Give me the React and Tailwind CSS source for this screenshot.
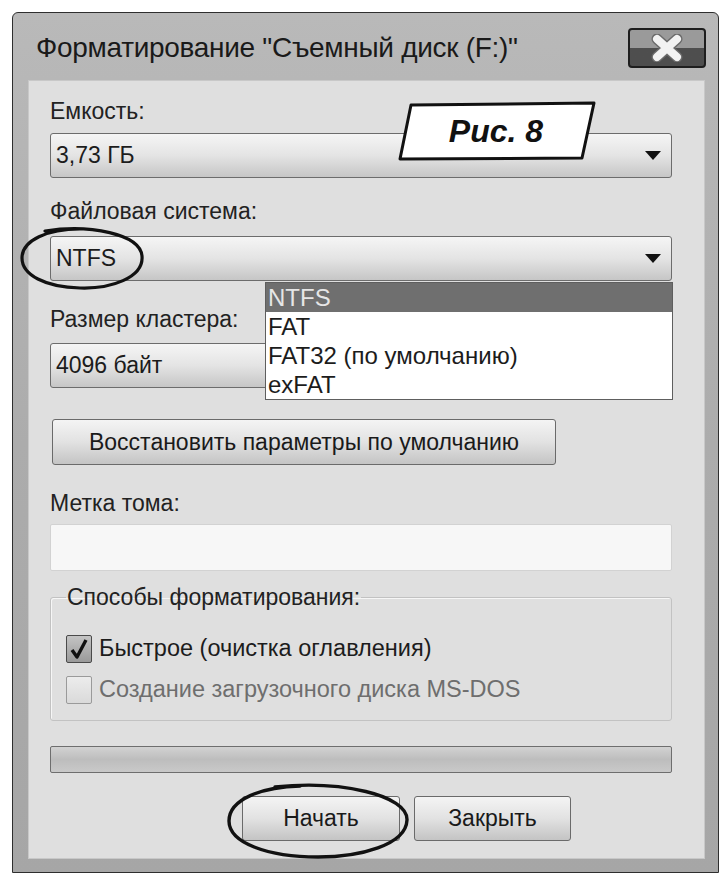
import React from "react";

const ui = { fontFamily: '"Liberation Sans", Arial, sans-serif' };

const Arrow = () => (
  <svg width="16" height="9" viewBox="0 0 16 9" className="shrink-0">
    <path d="M0 0 H16 L8 9 Z" fill="#111" />
  </svg>
);

const Combo = ({ value, className = "" }) => (
  <div
    className={`h-[45px] flex items-center justify-between pl-[5px] pr-[10px] border border-[#6c6c6c] rounded-[3px] bg-gradient-to-b from-[#f5f5f5] via-[#e4e4e4] to-[#c6c6c6] text-[23px] text-[#1c1c1c] ${className}`}
  >
    <span>{value}</span>
    <Arrow />
  </div>
);

const Label = ({ children, className = "" }) => (
  <div className={`h-[28px] leading-[28px] text-[23px] text-[#222] ${className}`}>{children}</div>
);

const Btn = ({ children, className = "" }) => (
  <div
    className={`flex items-center justify-center border border-[#6a6a6a] rounded-[3px] bg-gradient-to-b from-[#f4f4f4] via-[#e2e2e2] to-[#c4c4c4] text-[23px] text-[#1a1a1a] ${className}`}
  >
    {children}
  </div>
);

const CheckBox = ({ checked }) => (
  <div
    className={`w-[26px] h-[28px] shrink-0 flex items-center justify-center rounded-[2px] border ${
      checked
        ? "border-[#4a4a4a] bg-gradient-to-b from-[#c4c4c4] to-[#9a9a9a]"
        : "border-[#9a9a9a] bg-gradient-to-b from-[#ececec] to-[#dadada]"
    }`}
  >
    {checked && (
      <svg width="20" height="22" viewBox="0 0 20 22">
        <path d="M3 12 L8 19 L17 2" fill="none" stroke="#111" strokeWidth="3.4" strokeLinejoin="round" />
      </svg>
    )}
  </div>
);

export default function App() {
  return (
    <div className="relative w-[726px] h-[886px] bg-white pt-[12px] pl-[12px]" style={ui}>
      {/* window frame */}
      <div className="w-[707px] h-[861px] flex flex-col border border-[#2e2e2e] rounded-t-[6px] bg-gradient-to-b from-[#b9b9b9] via-[#acacac] to-[#a6a6a6]">
        {/* title bar */}
        <div className="h-[67px] flex items-center justify-between pl-[23px] pr-[12px] pt-[3px]">
          <span className="text-[28px] text-[#1a1a1a] tracking-[-0.3px]">
            Форматирование "Съемный диск (F:)"
          </span>
          <div className="w-[78px] h-[40px] flex items-center justify-center rounded-[4px] border-2 border-[#1e1e1e] bg-gradient-to-b from-[#9a9a9a] from-50% to-[#4e4e4e] to-50%">
            <svg width="34" height="28" viewBox="0 0 34 28">
              <path d="M7 5 L27 23 M27 5 L7 23" stroke="#6a6a6a" strokeWidth="11" strokeLinecap="round" />
              <path d="M7 5 L27 23 M27 5 L7 23" stroke="#f2f2f2" strokeWidth="8" strokeLinecap="round" />
            </svg>
          </div>
        </div>

        {/* client area */}
        <div className="flex-1 ml-[15px] mr-[13px] mb-[13px] bg-[#dfdfdf] border border-[#c8c8c8] pl-[21px] pr-[32px] pt-[16px] flex flex-col">
          <Label>Емкость:</Label>
          <Combo value="3,73 ГБ" className="mt-[8px]" />

          <Label className="mt-[19px]">Файловая система:</Label>
          <Combo value="NTFS" className="mt-[11px] h-[44px]" />

          <Label className="mt-[24px]">Размер кластера:</Label>
          <Combo value="4096 байт" className="mt-[10px] h-[43px]" />

          <Btn className="mt-[31px] w-[504px] h-[46px] ml-[2px]">Восстановить параметры по умолчанию</Btn>

          <Label className="mt-[24px]">Метка тома:</Label>
          <div className="mt-[7px] h-[47px] bg-[#f7f7f7] border border-[#d2d2d2] rounded-[2px]" />

          <fieldset className="mt-[12px] h-[138px] border border-[#c2c2c2] rounded-[3px] px-[15px] shadow-[inset_1px_1px_0_#f6f6f6]">
            <legend className="px-[1px] text-[23px] leading-[28px] text-[#222]">Способы форматирования:</legend>
            <div className="mt-[20px] flex items-center gap-[7px]">
              <CheckBox checked />
              <span className="text-[23.5px] text-[#1c1c1c]">Быстрое (очистка оглавления)</span>
            </div>
            <div className="mt-[6px] flex items-center gap-[7px]">
              <CheckBox />
              <span className="text-[23.5px] text-[#6e6e6e]">Создание загрузочного диска MS-DOS</span>
            </div>
          </fieldset>

          <div className="mt-[25px] h-[27px] border border-[#6e6e6e] rounded-[2px] bg-gradient-to-b from-[#d2d2d2] via-[#bdbdbd] to-[#c9c9c9]" />

          <div className="mt-[23px] flex gap-[14px] pl-[192px]">
            <Btn className="w-[158px] h-[45px]">Начать</Btn>
            <Btn className="w-[157px] h-[45px]">Закрыть</Btn>
          </div>
        </div>
      </div>

      {/* open drop-down list */}
      <div className="absolute left-[265px] top-[282px] w-[408px] border border-[#5e5e5e] bg-white text-[24px] leading-[29px] text-[#1c1c1c]">
        <div className="bg-[#6f6f6f] text-[#e6e6e6] pl-[2px]">NTFS</div>
        <div className="pl-[2px]">FAT</div>
        <div className="pl-[2px]">FAT32 (по умолчанию)</div>
        <div className="pl-[2px]">exFAT</div>
      </div>

      {/* annotation marks */}
      <svg className="absolute left-0 top-0 pointer-events-none" width="726" height="886" viewBox="0 0 726 886">
        <polygon points="411,105 594,103 582,158 400,159" fill="#fff" stroke="#111" strokeWidth="3" strokeLinejoin="round" />
        <path d="M45 231 C 90 224, 140 234, 142 256 C 144 278, 110 289, 80 288 C 45 287, 22 275, 22 258 C 22 240, 48 229, 80 229" fill="none" stroke="#111" strokeWidth="3.2" strokeLinecap="round" />
        <path d="M275 787 C 340 780, 408 795, 407 820 C 406 845, 360 857, 318 857 C 268 857, 229 843, 229 821 C 229 799, 262 787, 300 786" fill="none" stroke="#111" strokeWidth="3.4" strokeLinecap="round" />
      </svg>
      <div className="absolute left-[400px] top-[104px] w-[192px] h-[54px] flex items-center justify-center text-[32px] font-bold italic text-[#111]">
        Рис. 8
      </div>
    </div>
  );
}
